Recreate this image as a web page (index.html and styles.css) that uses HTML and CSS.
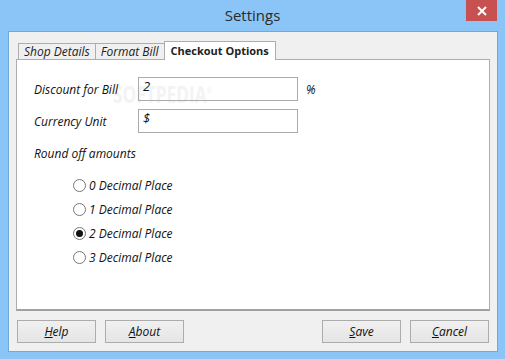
FILE: index.html
```html
<!DOCTYPE html>
<html lang="en">
<head>
    <meta charset="UTF-8">
    <title>Settings</title>
    <link rel="stylesheet" href="styles.css">
</head>
<body>

<div class="window">
    <div class="titlebar">
        <div class="title">Settings</div>
        <div class="close">
            <svg width="10" height="10" viewBox="0 0 10 10"><path d="M1 1L9 9M9 1L1 9" stroke="#fff" stroke-width="2"/></svg>
        </div>
    </div>

    <div class="client">
        <div class="tabs">
            <div class="tab">Shop Details</div>
            <div class="tab">Format Bill</div>
            <div class="tab active">Checkout Options</div>
        </div>

        <div class="panel">
            <div class="watermark">SOFTPEDIA<sup>&reg;</sup></div>

            <div class="field">
                <label>Discount for Bill</label>
                <div class="input">2</div>
                <span class="unit">%</span>
            </div>
            <div class="field">
                <label>Currency Unit</label>
                <div class="input">$</div>
            </div>

            <div class="group-title">Round off amounts</div>
            <div class="radios">
                <div class="radio"><span class="dot"></span>0 Decimal Place</div>
                <div class="radio"><span class="dot"></span>1 Decimal Place</div>
                <div class="radio"><span class="dot checked"></span>2 Decimal Place</div>
                <div class="radio"><span class="dot"></span>3 Decimal Place</div>
            </div>
        </div>

        <div class="buttons">
            <button><u>H</u>elp</button>
            <button><u>A</u>bout</button>
            <div class="spacer"></div>
            <button><u>S</u>ave</button>
            <button><u>C</u>ancel</button>
        </div>
    </div>
</div>

</body>
</html>
```

FILE: styles.css
```css
/* window frame */
body {
    margin: 0;
    font-family: "Open Sans", "Noto Sans", sans-serif;
}

.window {
    width: 505px;
    height: 359px;
    background-color: #8bc4f6;
    display: flex;
    flex-direction: column;
}

.titlebar {
    height: 31px;
    position: relative;
    display: flex;
    justify-content: center;
    align-items: center;
}

.title {
    font-size: 15px;
    color: #2b2b2b;
    margin-top: -2px;
}

.close {
    position: absolute;
    right: 8px;
    top: 0;
    width: 31px;
    height: 21px;
    background-color: #c75050;
    display: flex;
    align-items: center;
    justify-content: center;
}

/* client area */
.client {
    margin: 0 7px 7px 8px;
    flex: 1;
    background-color: #f0f0f0;
    border: 1px solid #6ea8dc;
    padding: 9px 7px 0 7px;
    display: flex;
    flex-direction: column;
}

.tabs {
    display: flex;
    align-items: flex-end;
    margin-left: 2px;
    height: 18px;
    position: relative;
    z-index: 1;
}

.tab {
    font-size: 12px;
    font-style: italic;
    color: #222;
    height: 15px;
    line-height: 15px;
    padding: 0 5px;
    border: 1px solid #adadad;
    border-bottom: none;
    background-color: #f0f0f0;
    margin-right: -1px;
}

.tab.active {
    font-size: 11px;
    font-style: normal;
    font-weight: bold;
    background-color: #fff;
    height: 18px;
    line-height: 18px;
    margin-bottom: -1px;
    padding: 0 6px;
}

.panel {
    position: relative;
    height: 252px;
    background-color: #fff;
    border: 1px solid #adadad;
    border-bottom: 2px solid #a0a0a0;
    padding: 17px 17px 0 17px;
    box-sizing: border-box;
    font-size: 12px;
    font-style: italic;
    color: #111;
}

/* faint watermark over the first field */
.watermark {
    position: absolute;
    left: 96px;
    top: 19px;
    font-size: 24px;
    line-height: 24px;
    font-weight: bold;
    font-style: normal;
    color: #f3f3f3;
    transform: scaleX(0.72);
    transform-origin: left top;
}

.watermark sup {
    font-size: 8px;
}

.field {
    display: flex;
    align-items: center;
    margin-bottom: 8px;
    position: relative;
}

.field label {
    width: 104px;
}

.input {
    width: 160px;
    height: 24px;
    box-sizing: border-box;
    border: 1px solid #ababab;
    padding: 1px 4px;
    line-height: 14px;
    font-size: 13px;
}

.unit {
    margin-left: 8px;
}

.group-title {
    margin-top: 12px;
}

.radios {
    margin: 15px 0 0 39px;
    display: flex;
    flex-direction: column;
    gap: 7px;
}

.radio {
    display: flex;
    align-items: center;
    height: 17px;
}

.dot {
    width: 11px;
    height: 11px;
    border: 1px solid #777;
    border-radius: 50%;
    background-color: #fff;
    margin-right: 3px;
    display: flex;
    align-items: center;
    justify-content: center;
}

.dot.checked::after {
    content: "";
    width: 7px;
    height: 7px;
    border-radius: 50%;
    background-color: #111;
}

/* bottom buttons */
.buttons {
    display: flex;
    padding: 9px 1px 0 1px;
    gap: 9px;
}

.spacer {
    flex: 1;
}

.buttons button {
    width: 79px;
    height: 23px;
    font-family: inherit;
    font-size: 12px;
    font-style: italic;
    color: #111;
    background: linear-gradient(#f0f0f0, #e5e5e5);
    border: 1px solid #acacac;
    padding: 0;
}
```
